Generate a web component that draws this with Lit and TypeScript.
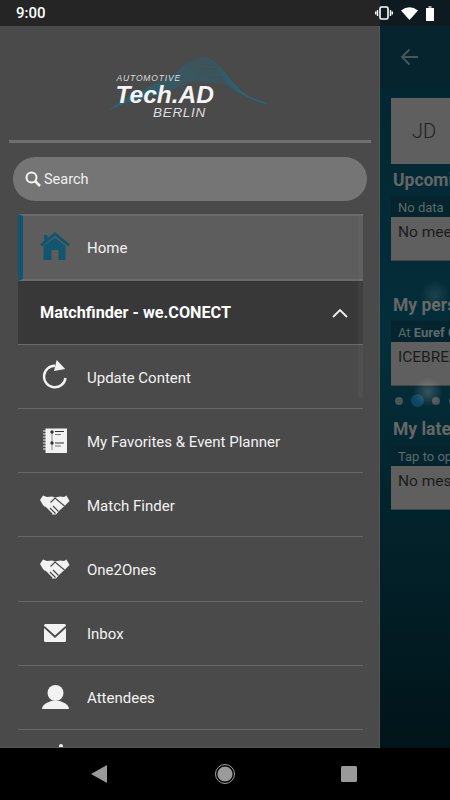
import { LitElement, html, css, svg } from "lit";
import { customElement } from "lit/decorators.js";

const shake = svg`<svg width="30" height="20" viewBox="0 0 30 20"><path fill="#f2f2f2" d="M0 5 L3 0.500 L7 2 L12 1.500 L15 2.500 L20 1.500 L24 2 L26.500 0.500 L29.500 6 L25 10.500 L20 15 L16 19.500 L12 19.500 L9 16 L3 10 Z"/><path fill="none" stroke="#4a4a4a" stroke-width="1.200" d="M24.500 11 L15 3 L10.500 7.500 M13 11 L18.500 16.500 M10 13 L15.500 18.500 M7 14 L12 19 M5 12 L9 16"/></svg>`;

const items: [string, unknown][] = [
  ["Update Content", svg`<svg width="26" height="33" viewBox="0 0 26 33"><path fill="none" stroke="#f2f2f2" stroke-width="2.400" d="M13 5.700 A10.800 10.800 0 1 0 23.500 18"/><path fill="#f2f2f2" d="M14.700 0 L23.200 9 L12 11 Z"/></svg>`],
  ["My Favorites & Event Planner", svg`<svg width="24" height="25" viewBox="0 0 24 25"><rect x="2.500" y="0.500" width="21.500" height="24.500" fill="#f2f2f2"/><g stroke="#f2f2f2" stroke-width="1.100"><path d="M0 3h3M0 6h3M0 9h3M0 12h3M0 15h3M0 18h3M0 21h3"/></g><path stroke="#8a8a8a" stroke-width="1" d="M9 3v19"/><g stroke="#333" stroke-width="1.100"><path d="M12 3.500h9M12 15h9"/></g><g stroke="#777" stroke-width="1.100"><path d="M12 6.500h6M12 18h6"/></g><circle cx="9" cy="4" r="1.700" fill="#333"/><circle cx="9" cy="15" r="1.700" fill="#333"/></svg>`],
  ["Match Finder", shake],
  ["One2Ones", shake],
  ["Inbox", svg`<svg width="22" height="18" viewBox="0 0 22 18"><rect width="22" height="18" rx="1.500" fill="#f2f2f2"/><path fill="none" stroke="#4a4a4a" stroke-width="1.800" d="M0 2.700 L11 12.700 L22 2.700"/></svg>`],
  ["Attendees", svg`<svg width="27" height="24" viewBox="0 0 27 24"><circle cx="13.500" cy="8" r="8" fill="#f2f2f2"/><path fill="#f2f2f2" d="M0 24 C0.500 20 3 18.500 9 16 L18 16 C24 18.500 26.500 20 27 24 Z"/></svg>`],
];

const waveLines = Array.from({ length: 20 }, (_, i) => {
  const t = i / 19;
  const px = 98 + t * 24, py = 4 + t * 26;
  return `M${2 + t * 10} ${56 - t * 6} C${22 + t * 14} ${38 + t * 6} ${52 + t * 8} ${30 + t * 8} ${66 + t * 8} ${20 + t * 12} C${78 + t * 6} ${10 + t * 12} ${88 + t * 8} ${py} ${px} ${py} C${116 + t * 4} ${py + 2} ${124 - t * 2} ${44 - t * 8} ${160 - t * 6} ${50 - t * 2}`;
}).join(" ");

@customElement("app-root")
export class AppRoot extends LitElement {
  static styles = css`
    :host { display: flex; flex-direction: column; width: 450px; height: 800px; overflow: hidden; font-family: Roboto, sans-serif; position: relative; }
    .status { height: 26px; flex: none; display: flex; background: linear-gradient(90deg, #252525 380px, #0e1a1f 380px); color: #fff; align-items: center; justify-content: space-between; padding: 0 16px; box-sizing: border-box; font-size: 15px; font-weight: 500; }
    .status-icons { display: flex; align-items: center; gap: 8px; }
    .main { flex: 1; min-height: 0; display: flex; }
    .drawer { width: 380px; flex: none; box-sizing: border-box; background: #4a4a4a; border-right: 1px solid #555; border-bottom: 1px solid #555; overflow: hidden; display: flex; flex-direction: column; }
    .logo { height: 114px; flex: none; display: flex; justify-content: center; padding-left: 1px; }
    .logo-box { position: relative; width: 165px; height: 70px; margin-top: 28px; }
    .wave { position: absolute; left: 0; top: 0; }
    .auto, .tech, .berlin { position: absolute; line-height: 1; font-family: "Liberation Sans", sans-serif; font-style: italic; white-space: nowrap; }
    .auto { left: 9px; top: 20px; font-size: 8.500px; color: #ddd; letter-spacing: .85px; }
    .tech { left: 8px; top: 31px; font-size: 24.500px; line-height: 20px; font-weight: 700; color: #f4f4f4; }
    .berlin { left: 45.500px; top: 52px; font-size: 13.500px; color: #ddd; letter-spacing: .7px; }
    .rule { height: 3px; background: #6f6f6f; margin: 0 8px 0 9px; flex: none; }
    .search { margin: 14px 12px 13px 13px; height: 44px; flex: none; border-radius: 22px; background: #757575; display: flex; align-items: center; padding-left: 12px; gap: 3px; color: #f0f0f0; font-size: 14.500px; }
    .list { margin: 0 16px 0 18px; flex: 1; min-height: 0; overflow: hidden; position: relative; }
    .home { height: 63px; display: flex; align-items: center; background: #5d5d5d; border-top: 2px solid #6a6a6a; border-bottom: 2px solid #6a6a6a; border-left: 5px solid #11566e; color: #f2f2f2; font-size: 15px; }
    .ic { width: 64px; margin-left: 5px; flex: none; display: flex; justify-content: center; }
    .home .ic { margin-left: 0; }
    .section { height: 63px; background: #383838; display: flex; align-items: center; justify-content: space-between; padding: 0 15px 0 22px; color: #fff; font-weight: 700; font-size: 16.200px; border-bottom: 1px solid #6a6a6a; }
    .item { height: 63.150px; display: flex; align-items: center; border-bottom: 1px solid #666; color: #f2f2f2; font-size: 15px; }
    .item span { margin-top: 2px; }
    .dot { position: absolute; left: 41px; bottom: 0; width: 4px; height: 3px; border-radius: 3px 3px 0 0; background: #eee; }
    .thumb { position: absolute; right: 0; top: 0; width: 5px; height: 183px; background: rgba(130, 130, 130, .1); }
    .content { flex: 1; min-width: 0; background: linear-gradient(#022530 0, #032e3a 45%, #03242d 65%, #01141a 100%); display: flex; flex-direction: column; overflow: hidden; position: relative; }
    .bar { height: 62px; flex: none; background: #05242e; display: flex; align-items: center; padding-left: 20px; }
    .body { flex: 1; padding: 10px 0 0 11px; white-space: nowrap; }
    .avatar { width: 80px; height: 66px; background: #5f5f5f; color: #222; font-size: 20px; font-weight: 300; display: flex; align-items: center; padding-left: 21px; box-sizing: border-box; }
    h3 { margin: 0; font-size: 17.500px; line-height: 24px; color: #666; font-weight: 700; padding-left: 2px; }
    .card { width: 80px; margin-top: 4px; }
    .card-head { height: 21px; line-height: 24px; background: #05242e; color: #5a6b70; font-size: 13px; padding-left: 7px; }
    .card-head b { font-weight: 700; }
    .card-body { height: 44px; background: #5f5f5f; border-bottom: 1px solid #444; color: #1c1c1c; font-size: 15.500px; padding: 6px 0 0 7px; box-sizing: border-box; }
    .t1 { margin-top: 4px; }
    .t2 { margin-top: 32px; }
    .t3 { margin-top: 2px; }
    .dots { height: 29px; display: flex; align-items: center; padding-left: 4px; }
    .dots i { width: 8px; height: 8px; border-radius: 50%; background: #4a5557; flex: none; margin-right: 10.500px; }
    .dots i.on { width: 13px; height: 13px; background: #0c4660; margin: 0 8px 0 -2.500px; }
    .dots i:nth-child(3) { margin-right: 8.500px; }
    .glow { position: absolute; width: 30px; height: 30px; border-radius: 50%; background: radial-gradient(circle, rgba(255, 255, 255, .2), rgba(255, 255, 255, 0) 70%); }
    .g1 { left: 33px; top: 351px; }
    .g2 { left: 40px; top: 254px; background: radial-gradient(circle, rgba(255, 255, 255, .1), rgba(255, 255, 255, 0) 70%); }
    .nav { height: 52px; flex: none; background: #000; display: flex; justify-content: center; align-items: center; }
    .nav svg { display: block; }
    .nb { width: 125px; display: flex; justify-content: center; }
    .shift { margin-right: 2px; }
  `;
  render() {
    return html`
      <div class="status"><span>9:00</span>
        <div class="status-icons">
          <svg width="18" height="14" viewBox="0 0 18 14"><rect x="5" y="1" width="8" height="12" rx="1.500" fill="none" stroke="#fff" stroke-width="1.600"/><path stroke="#fff" stroke-width="1.400" d="M2.500 4v6M15.500 4v6M.7 5.500v3M17.300 5.500v3"/></svg>
          <svg width="17" height="13" viewBox="0 0 17 13"><path fill="#fff" d="M0 3.500 Q8.500 -3 17 3.500 L8.500 13 Z"/></svg>
          <svg width="8" height="15" viewBox="0 0 8 15"><path fill="#aaa" d="M2.500 0h3v2h-3z"/><path fill="#fff" d="M0 2h8v13H0z"/></svg>
        </div>
      </div>
      <div class="main">
        <div class="drawer">
          <div class="logo"><div class="logo-box">
            <svg class="wave" width="165" height="62" viewBox="0 0 165 62"><path fill="none" stroke="#2a6375" stroke-width=".55" d="${waveLines}"/></svg>
            <span class="auto">AUTOMOTIVE</span><span class="tech">Tech.AD</span><span class="berlin">BERLIN</span>
          </div></div>
          <div class="rule"></div>
          <div class="search">
            <svg width="16" height="16" viewBox="0 0 16 16"><circle cx="6.500" cy="6.500" r="5" fill="none" stroke="#f5f5f5" stroke-width="2"/><path stroke="#f5f5f5" stroke-width="2.500" d="M10 10l5 5"/></svg>
            <span>Search</span>
          </div>
          <div class="list">
            <div class="home"><div class="ic"><svg width="30" height="31" viewBox="0 0 30 31"><path fill="#11566e" d="M15 0 L30 12.500 L28 14.500 L15 3.800 L2 14.500 L0 12.500 L4 9 V3 H7.500 V6.200Z M15 5.500 L25.500 14 V28 H18.500 V18 H11.500 V28 H3.500 V14Z"/></svg></div><span>Home</span></div>
            <div class="section"><span>Matchfinder - we.CONECT</span>
              <svg width="16" height="10" viewBox="0 0 16 10"><path fill="none" stroke="#eee" stroke-width="1.800" d="M1 9 L8 2 L15 9"/></svg></div>
            ${items.map(([t, i]) => html`<div class="item"><div class="ic">${i}</div><span>${t}</span></div>`)}
            <div class="thumb"></div>
            <div class="dot"></div>
          </div>
        </div>
        <div class="content">
          <div class="bar"><svg width="19" height="18" viewBox="0 0 19 18"><path fill="none" stroke="#45555a" stroke-width="2" d="M18 9H2M9.500 1.500L2 9l7.500 7.500"/></svg></div>
          <div class="body">
            <div class="avatar">JD</div>
            <h3 class="t1">Upcoming meetings</h3>
            <div class="card"><div class="card-head">No data</div><div class="card-body">No meetings</div></div>
            <h3 class="t2">My personal agenda</h3>
            <div class="card"><div class="card-head">At <b>Euref Campus</b></div><div class="card-body">ICEBREAKER</div></div>
            <div class="dots"><i></i><i class="on"></i><i></i><i></i></div>
            <h3 class="t3">My latest messages</h3>
            <div class="card"><div class="card-head">Tap to open</div><div class="card-body">No messages</div></div>
          </div>
          <div class="glow g1"></div>
          <div class="glow g2"></div>
        </div>
      </div>
      <div class="nav">
        <div class="nb"><svg class="shift" width="16" height="18" viewBox="0 0 16 18"><path fill="#9a9a9a" d="M16 0V18L0 9Z"/></svg></div>
        <div class="nb"><svg width="20" height="20" viewBox="0 0 20 20"><circle cx="10" cy="10" r="9.500" fill="none" stroke="#a0a0a0" stroke-width="1"/><circle cx="10" cy="10" r="7.600" fill="#9a9a9a"/></svg></div>
        <div class="nb"><svg class="shift" width="16" height="16" viewBox="0 0 16 16"><rect width="16" height="16" rx="1.500" fill="#9a9a9a"/></svg></div>
      </div>
    `;
  }
}
